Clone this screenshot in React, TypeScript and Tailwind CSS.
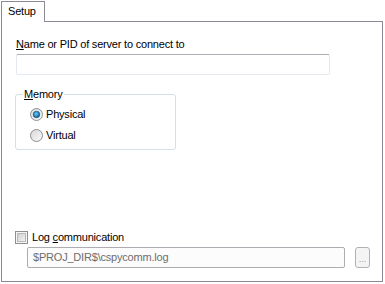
function Radio({ checked }: { checked?: boolean }) {
  return (
    <svg width="13" height="13" viewBox="0 0 13 13" className="shrink-0">
      <defs>
        <linearGradient id={checked ? 'rgOn' : 'rgOff'} x1="0" y1="0" x2="1" y2="1">
          <stop offset="0" stopColor="#d6d6d6" />
          <stop offset="1" stopColor="#fbfbfb" />
        </linearGradient>
        <radialGradient id="dot" cx="0.45" cy="0.4" r="0.6">
          <stop offset="0" stopColor="#6ad2f7" />
          <stop offset="0.6" stopColor="#2a86c0" />
          <stop offset="1" stopColor="#17547e" />
        </radialGradient>
      </defs>
      <circle cx="6.5" cy="6.5" r="6" fill={`url(#${checked ? 'rgOn' : 'rgOff'})`} stroke="#8e8f8f" />
      {checked && <circle cx="6.5" cy="6.5" r="3.3" fill="url(#dot)" stroke="#1b4f74" strokeWidth="0.6" />}
    </svg>
  )
}

function Checkbox() {
  return (
    <svg width="13" height="13" viewBox="0 0 13 13" className="shrink-0">
      <defs>
        <linearGradient id="cbIn" x1="0" y1="0" x2="1" y2="1">
          <stop offset="0" stopColor="#cfcfcf" />
          <stop offset="1" stopColor="#f4f4f4" />
        </linearGradient>
      </defs>
      <rect x="0.5" y="0.5" width="12" height="12" fill="#f6f6f6" stroke="#8e8f8f" />
      <rect x="2.5" y="2.5" width="8" height="8" fill="url(#cbIn)" stroke="#b9b9b9" />
    </svg>
  )
}

export default function App() {
  return (
    <div className="w-[385px] h-[284px] bg-white font-['Liberation_Sans',Arial,sans-serif] text-[11px] leading-[13px] tracking-[-0.2px] text-black">
      {/* tab */}
      <div className="pt-px pl-px">
        <div className="relative z-10 w-[44px] h-[21px] -mb-px border border-b-0 border-[#898c95] bg-white pl-[6px] pt-[3px]">
          Setup
        </div>
      </div>

      {/* page */}
      <div className="ml-px w-[382px] h-[261px] border border-[#898c95] pl-[14px] pt-[16px]">
        <div>
          <span className="underline">N</span>ame or PID of server to connect to
        </div>
        <div className="mt-[3px] w-[314px] h-[21px] border border-[#e3e9ef] border-t-[#abadb3] rounded-[2px] bg-white" />

        {/* group box */}
        <div className="relative mt-[19px] -ml-px w-[161px] h-[56px] border border-[#d5dfe5] rounded-[3px] pl-[14px] pt-[13px] flex flex-col gap-[8px]">
          <span className="absolute -top-[7px] left-[7px] bg-white px-[1px]">
            <span className="underline">M</span>emory
          </span>
          <div className="flex items-center gap-[3px] h-[13px]">
            <Radio checked />
            <span>Physical</span>
          </div>
          <div className="flex items-center gap-[3px] h-[13px]">
            <Radio />
            <span>Virtual</span>
          </div>
        </div>

        <div className="mt-[81px] -ml-px flex items-center gap-[4px] h-[13px]">
          <Checkbox />
          <span>
            Log <span className="underline">c</span>ommunication
          </span>
        </div>

        <div className="mt-[3px] ml-[11px] flex items-center">
          <div className="w-[318px] h-[21px] border border-[#abadb3] rounded-[2px] bg-[#fcfcfc] pl-[5px] flex items-center text-[#6d6d6d]">
            $PROJ_DIR$\cspycomm.log
          </div>
          <div className="ml-[10px] w-[15px] h-[21px] border border-[#adb2b5] rounded-[3px] bg-[#f4f4f4] flex items-end justify-center pb-[3px] text-[9px] leading-[9px] text-[#9a9a9a] tracking-normal">
            ...
          </div>
        </div>
      </div>
    </div>
  )
}
